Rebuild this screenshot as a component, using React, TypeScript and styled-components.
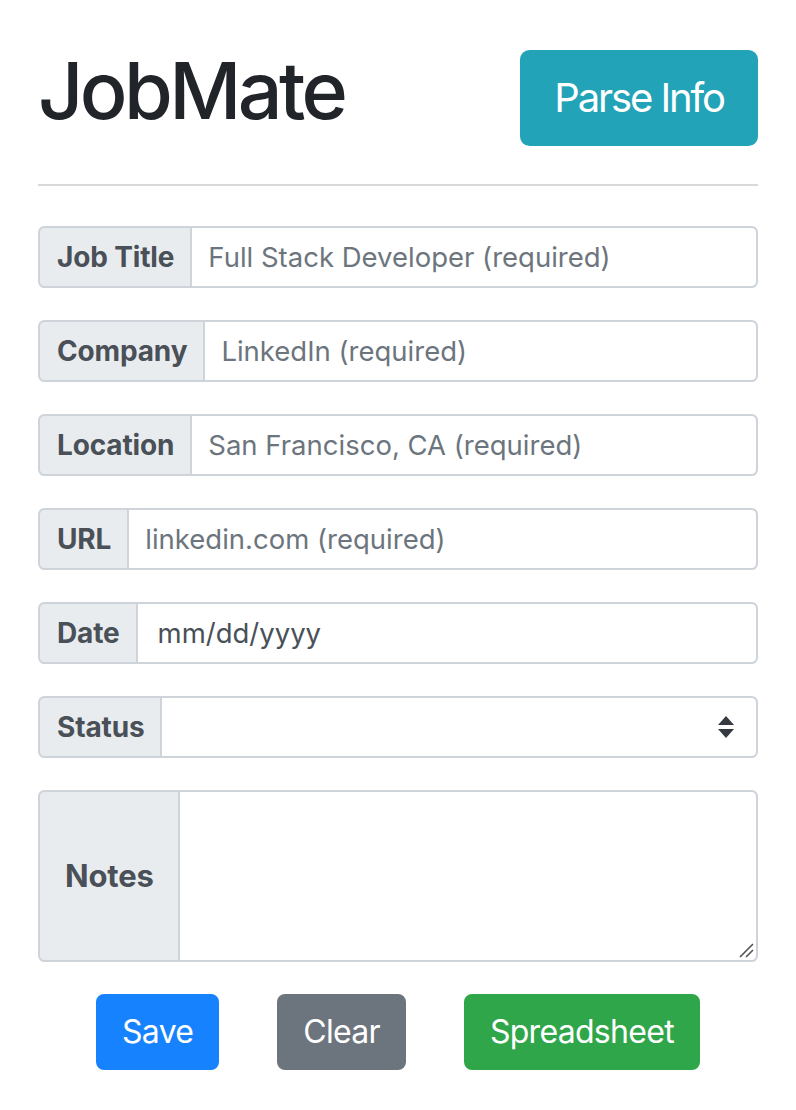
import React from "react";
import styled, { createGlobalStyle } from "styled-components";

const Global = createGlobalStyle`
  html, body { margin: 0; padding: 0; background: #fff; }
  body { font-family: Inter, "Noto Sans", "Liberation Sans", sans-serif; color: #212529; }
  * { box-sizing: border-box; }
`;

const Page = styled.div`
  padding: 43px 38px 40px;
  display: flex;
  flex-direction: column;
`;

const Header = styled.div`
  display: flex;
  align-items: center;
  justify-content: space-between;
`;

const Title = styled.h1`
  margin: 0 0 16px;
  font-size: 79px;
  font-weight: 500;
  line-height: 1.2;
  letter-spacing: -3.6px;
  color: #212529;
`;

const Btn = styled.button<{ $bg: string; $lg?: boolean }>`
  font-family: inherit;
  background: ${(p) => p.$bg};
  border: 2px solid ${(p) => p.$bg};
  color: #fff;
  font-size: ${(p) => (p.$lg ? "40px" : "32px")};
  line-height: 1.5;
  padding: ${(p) => (p.$lg ? "16px 32px" : "12px 24px")};
  border-radius: ${(p) => (p.$lg ? "9.6px" : "8px")};
  font-weight: 400;
  letter-spacing: ${(p) => (p.$lg ? "-2.1px" : "-0.7px")};
  cursor: pointer;
`;

const Rule = styled.hr`
  margin: 30px 0 40px;
  border: 0;
  border-top: 2px solid rgba(0, 0, 0, 0.15);
`;

const Group = styled.div<{ $tall?: boolean }>`
  display: flex;
  height: ${(p) => (p.$tall ? "172px" : "62px")};
  margin-bottom: 32px;
`;

const Label = styled.span<{ $big?: boolean }>`
  display: flex;
  align-items: center;
  padding: ${(p) => (p.$big ? "0 24px 0 25px" : "0 16px 0 17px")};
  font-size: ${(p) => (p.$big ? "31px" : "28px")};
  font-weight: 700;
  letter-spacing: -0.15px;
  color: #495057;
  background: #e9ecef;
  border: 2px solid #ced4da;
  border-right-width: 1px;
  border-radius: 6.4px 0 0 6.4px;
  white-space: nowrap;
`;

const Field = styled.input<{ $pad?: number; $dark?: boolean }>`
  flex: 1;
  min-width: 0;
  font-family: inherit;
  font-size: 27.5px;
  color: #495057;
  padding: 0 16px 0 ${(p) => p.$pad ?? 16}px;
  border: 2px solid #ced4da;
  border-left-width: 1px;
  border-radius: 0 6.4px 6.4px 0;
  outline: none;
  &::placeholder {
    color: ${(p) => (p.$dark ? "#495057" : "#6c757d")};
    opacity: 1;
  }
`;

const SelectBox = styled.div`
  flex: 1;
  display: flex;
  align-items: center;
  justify-content: flex-end;
  padding-right: 22px;
  border: 2px solid #ced4da;
  border-left-width: 1px;
  border-radius: 0 6.4px 6.4px 0;
`;

const AreaWrap = styled.div`
  flex: 1;
  position: relative;
  display: flex;
`;

const Area = styled.textarea`
  flex: 1;
  font-family: inherit;
  font-size: 27.5px;
  color: #495057;
  padding: 8px 16px;
  border: 2px solid #ced4da;
  border-left-width: 1px;
  border-radius: 0 6.4px 6.4px 0;
  outline: none;
  resize: none;
`;

const Grip = styled.svg`
  position: absolute;
  right: 4px;
  bottom: 4px;
  pointer-events: none;
`;

const Actions = styled.div`
  display: flex;
  justify-content: center;
  gap: 58px;
`;

const fields = [
  { label: "Job Title", ph: "Full Stack Developer (required)" },
  { label: "Company", ph: "LinkedIn (required)" },
  { label: "Location", ph: "San Francisco, CA (required)" },
  { label: "URL", ph: "linkedin.com (required)" },
];

export default function App() {
  return (
    <Page>
      <Global />
      <Header>
        <Title>JobMate</Title>
        <Btn $bg="#22a3b7" $lg>Parse Info</Btn>
      </Header>
      <Rule />
      {fields.map((f) => (
        <Group key={f.label}>
          <Label>{f.label}</Label>
          <Field placeholder={f.ph} />
        </Group>
      ))}
      <Group>
        <Label>Date</Label>
        <Field placeholder="mm/dd/yyyy" $pad={20} $dark />
      </Group>
      <Group>
        <Label>Status</Label>
        <SelectBox>
          <svg width="16" height="24" viewBox="0 0 16 24">
            <path d="M8 1 L16 10 L0 10 Z" fill="#343a40" />
            <path d="M0 14 L16 14 L8 23 Z" fill="#343a40" />
          </svg>
        </SelectBox>
      </Group>
      <Group $tall>
        <Label $big>Notes</Label>
        <AreaWrap>
          <Area />
          <Grip width="16" height="16" viewBox="0 0 16 16">
            <path d="M2 15 L15 2 M8 15 L15 8" stroke="#555" strokeWidth="1.6" />
          </Grip>
        </AreaWrap>
      </Group>
      <Actions>
        <Btn $bg="#1782fd">Save</Btn>
        <Btn $bg="#6c757d">Clear</Btn>
        <Btn $bg="#30a64a">Spreadsheet</Btn>
      </Actions>
    </Page>
  );
}
